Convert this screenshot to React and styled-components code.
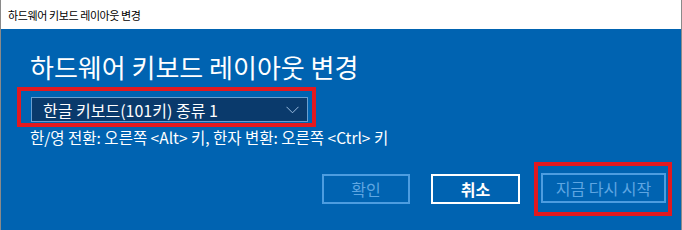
import React from 'react';
import styled, { createGlobalStyle } from 'styled-components';

const GlobalStyle = createGlobalStyle`
  html, body {
    margin: 0;
    padding: 0;
    background: #ffffff;
  }
  body {
    font-family: "Noto Sans CJK KR", "Noto Sans", sans-serif;
  }
`;

const Window = styled.div`
  width: 682px;
  height: 230px;
  box-sizing: border-box;
  display: flex;
  flex-direction: column;
  border-left: 1px solid #8a8a8a;
  border-right: 1px solid #8a8a8a;
  overflow: hidden;
`;

const TitleBar = styled.div`
  height: 29px;
  flex: none;
  display: flex;
  align-items: center;
  padding-left: 7px;
  background: #ffffff;
  color: #000000;
  font-size: 11px;
  letter-spacing: -0.4px;
`;

const Body = styled.div`
  flex: 1;
  background: #0063b1;
  color: #ffffff;
  padding: 22px 0 0 29px;
  display: flex;
  flex-direction: column;
`;

const Heading = styled.h1`
  margin: 0;
  font-size: 26px;
  font-weight: 400;
  line-height: 32px;
`;

const Highlight = styled.div`
  border: 4px solid #e3191f;
  padding: ${(p) => p.$pad};
  margin: ${(p) => p.$margin || 0};
  align-self: flex-start;
`;

const Select = styled.div`
  width: 277px;
  height: 25px;
  box-sizing: border-box;
  border: 1px solid #6a9fd0;
  background: #0a3a6c;
  display: flex;
  align-items: center;
  justify-content: space-between;
  padding: 0 8px 0 11px;
  font-size: 16px;
  color: #ffffff;
`;

const Hint = styled.div`
  margin-top: 1px;
  font-size: 15.5px;
  line-height: 18px;
`;

const Actions = styled.div`
  margin-top: 16px;
  margin-right: 9px;
  display: flex;
  align-items: center;
  justify-content: flex-end;
  gap: 21px;
`;

const Button = styled.button`
  height: 30px;
  width: ${(p) => p.$w}px;
  box-sizing: border-box;
  background: transparent;
  border: 2px solid ${(p) => (p.$active ? '#ffffff' : '#4d9de0')};
  color: ${(p) => (p.$active ? '#ffffff' : '#5ea6e2')};
  font-family: inherit;
  font-size: 16px;
  font-weight: ${(p) => (p.$active ? 700 : 400)};
  padding: 0;
`;

const Chevron = () => (
  <svg width="13" height="8" viewBox="0 0 13 8">
    <path d="M0.5 0.8 L6.5 6.8 L12.5 0.8" fill="none" stroke="#9cbde0" strokeWidth="1" />
  </svg>
);

export default function App() {
  return (
    <>
      <GlobalStyle />
      <Window>
        <TitleBar>하드웨어 키보드 레이아웃 변경</TitleBar>
        <Body>
          <Heading>하드웨어 키보드 레이아웃 변경</Heading>
          <Highlight $pad="6px 4px 1px 10px" $margin="4px 0 0 -13px">
            <Select>
              <span>한글 키보드(101키) 종류 1</span>
              <Chevron />
            </Select>
          </Highlight>
          <Hint>한/영 전환: 오른쪽 &lt;Alt&gt; 키, 한자 변환: 오른쪽 &lt;Ctrl&gt; 키</Hint>
          <Actions>
            <Button $w={88}>확인</Button>
            <Button $w={89} $active>취소</Button>
            <Highlight $pad="7px 2px 9px 3px" $margin="0 0 0 -7px">
              <Button $w={125}>지금 다시 시작</Button>
            </Highlight>
          </Actions>
        </Body>
      </Window>
    </>
  );
}
